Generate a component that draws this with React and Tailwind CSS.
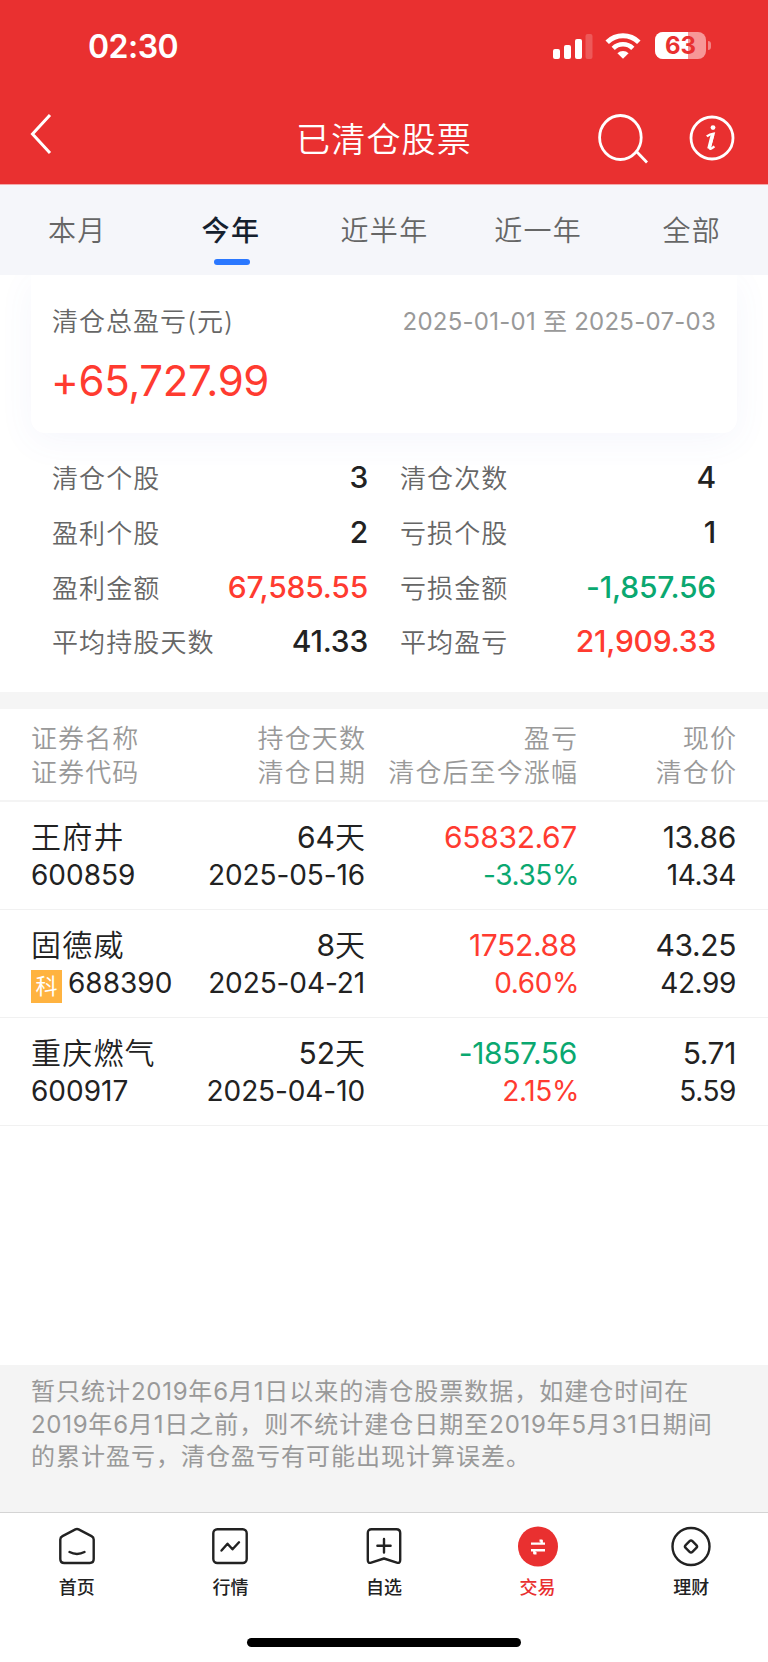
import React from 'react';
import clsx from 'clsx';

const tabs = ['本月', '今年', '近半年', '近一年', '全部'];

const stats = [
  { label: '清仓个股', value: '3' },
  { label: '清仓次数', value: '4' },
  { label: '盈利个股', value: '2' },
  { label: '亏损个股', value: '1' },
  { label: '盈利金额', value: '67,585.55', color: 'text-[#ff3b30]' },
  { label: '亏损金额', value: '-1,857.56', color: 'text-[#0aa870]' },
  { label: '平均持股天数', value: '41.33' },
  { label: '平均盈亏', value: '21,909.33', color: 'text-[#ff3b30]' },
];

const stocks = [
  { name: '王府井', code: '600859', days: '64', date: '2025-05-16', profit: '65832.67', change: '-3.35%', price: '13.86', sold: '14.34' },
  { name: '固德威', code: '688390', tag: '科', days: '8', date: '2025-04-21', profit: '1752.88', change: '0.60%', price: '43.25', sold: '42.99' },
  { name: '重庆燃气', code: '600917', days: '52', date: '2025-04-10', profit: '-1857.56', change: '2.15%', price: '5.71', sold: '5.59' },
];

const notice = [
  '暂只统计2019年6月1日以来的清仓股票数据，如建仓时间在',
  '2019年6月1日之前，则不统计建仓日期至2019年5月31日期间',
  '的累计盈亏，清仓盈亏有可能出现计算误差。',
];

const signColor = (v) => (v.startsWith('-') ? 'text-[#0aa870]' : 'text-[#ff3b30]');

const StatusBar = () => (
  <div className="flex h-[92px] items-start justify-between pl-[88px] pr-[58px]">
    <span className="mt-[27px] text-[32px] leading-[40px] font-semibold tracking-[-0.5px] text-white">02:30</span>
    <div className="mt-[32px] flex items-center">
      <svg className="h-[26px] w-[40px]" viewBox="0 0 40 26" fill="#fff">
        <rect x="0" y="16" width="7" height="10" rx="2" />
        <rect x="11" y="12" width="7" height="14" rx="2" />
        <rect x="22" y="6" width="7" height="20" rx="2" />
        <rect x="32.5" y="1" width="7" height="25" rx="2" opacity="0.2" />
      </svg>
      <svg className="ml-[12px] h-[26px] w-[36px]" viewBox="0 0 36 26" fill="none" stroke="#fff">
        <path d="M2.2 9.3a22.6 22.6 0 0 1 31.6 0" strokeWidth="5" />
        <path d="M8.2 15.3a14 14 0 0 1 19.6 0" strokeWidth="4.6" />
        <path d="M18 25.7l-5.6-5.4a8 8 0 0 1 11.2 0z" fill="#fff" stroke="none" />
      </svg>
      <div className="relative ml-[14px] flex h-[27px] w-[51px] items-center justify-center overflow-hidden rounded-[8px] bg-[#f79797]">
        <div className="absolute inset-y-0 left-0 w-[33px] bg-white" />
        <span className="relative text-[24px] leading-[27px] font-bold text-[#e93030]">63</span>
      </div>
      <div className="-mr-px ml-[2px] h-[9px] w-[3px] rounded-r-full bg-[#f28383]" />
    </div>
  </div>
);

const NavBar = () => (
  <div className="grid h-[93px] grid-cols-[1fr_auto_1fr] border-b border-[#f3a9aa] text-white">
    <svg className="mt-[21px] ml-[30px] h-[42px] w-[22px]" viewBox="0 0 22 42" fill="none" stroke="#fff" strokeWidth="3">
      <path d="M20 2L2.5 21L20 40" />
    </svg>
    <h1 className="mt-[25px] text-[34px] leading-[46px] font-[350] tracking-[1.2px]">已清仓股票</h1>
    <div className="flex justify-end pr-[33px]">
      <svg className="mt-[21px] h-[51px] w-[50px]" viewBox="0 0 50 51" fill="none" stroke="#fff" strokeWidth="2.8">
        <ellipse cx="22.4" cy="24.5" rx="20.8" ry="22" />
        <path d="M38 38L49 49.5" />
      </svg>
      <svg className="mt-[23px] ml-[41px] h-[46px] w-[46px]" viewBox="0 0 46 46" fill="none" stroke="#fff" strokeWidth="2.8">
        <circle cx="23" cy="23" r="21" />
        <circle cx="24" cy="12.600" r="2.400" fill="#fff" stroke="none" />
        <path d="M17.800 21.400c2-1.600 4.200-2.600 6.800-2.800l-3.800 13.600c-.6 2.400 1.400 2 4.600-.8" strokeWidth="2.400" />
        <path d="M23.600 19.400L20 33.600" strokeWidth="3.600" />
      </svg>
    </div>
  </div>
);

const Tabs = () => (
  <div className="grid h-[90px] grid-cols-5 bg-[#f5f6fa]">
    {tabs.map((tab, i) => (
      <div key={tab} className="flex flex-col items-center">
        <span
          className={clsx(
            'mt-[26px] -mr-px text-[28px] leading-[40px] tracking-[1.3px]',
            i === 1 ? 'font-medium text-[#15202e]' : 'font-[350] text-[#666]'
          )}
        >
          {tab}
        </span>
        {i === 1 && <div className="mt-[8px] ml-[3px] h-[6px] w-[36px] rounded-full bg-[#2b78ff]" />}
      </div>
    ))}
  </div>
);

const Summary = () => (
  <div className="h-[190px] overflow-hidden px-[31px]">
    <div className="h-[158px] rounded-b-[14px] bg-white px-[21px] pt-[29px] shadow-[0_8px_36px_rgba(90,110,200,0.06)]">
      <div className="flex items-center justify-between">
        <span className="text-[26px] leading-[36px] font-[350] tracking-[1px] text-[#666]">清仓总盈亏(元)</span>
        <span className="text-[24px] leading-[36px] tracking-[0.25px] text-[#999]">2025-01-01 至 2025-07-03</span>
      </div>
      <div className="mt-[15px] -ml-px text-[42px] leading-[52px] tracking-[-0.35px] text-[#ff3b30]">+65,727.99</div>
    </div>
  </div>
);

const Stats = () => (
  <div className="grid h-[227px] grid-cols-[316px_316px] content-start gap-x-[32px] bg-white pl-[52px]">
    {stats.map((s) => (
      <div key={s.label} className="flex h-[54.8px] items-start justify-between">
        <span className="text-[26px] leading-[28px] font-[350] tracking-[1.1px] text-[#666]">{s.label}</span>
        <span className={clsx('text-[30px] leading-[25px] font-medium tracking-[-0.2px]', s.color || 'text-[#222]')}>{s.value}</span>
      </div>
    ))}
  </div>
);

const cols = 'grid grid-cols-[150px_184px_212px_159px] px-[31px]';

const StockTable = () => (
  <div className="border-t-[17px] border-[#f5f5f5] bg-white">
    <div className={clsx(cols, 'h-[93px] border-b-2 border-[#f4f4f4] pt-[13px] text-[26px] leading-[34px] font-[350] tracking-[1.1px] whitespace-nowrap text-[#999]')}>
      <div>证券名称<br />证券代码</div>
      <div className="-mr-px text-right">持仓天数<br />清仓日期</div>
      <div className="-mr-px flex flex-col items-end"><span>盈亏</span><span>清仓后至今涨幅</span></div>
      <div className="-mr-px text-right">现价<br />清仓价</div>
    </div>
    {stocks.map((s) => (
      <div key={s.code} className={clsx(cols, 'h-[108px] border-b border-[#f1f1f1] pt-[16px] text-[28px] leading-[39px] text-[#222]')}>
        <div>
          <div className="text-[30px] leading-[38px] font-[350] tracking-[1.2px]">{s.name}</div>
          <div className="flex">
            {s.tag && (
              <span className="mt-[6px] mr-[6px] h-[33px] w-[31px] bg-[#ffb340] text-center text-[22px] leading-[33px] text-white">{s.tag}</span>
            )}
            {s.code}
          </div>
        </div>
        <div className="text-right">
          <div className="text-[30px] leading-[38px]">{s.days}<span className="font-[350]">天</span></div>
          <div className="tracking-[-0.1px]">{s.date}</div>
        </div>
        <div className="text-right">
          <div className={clsx('text-[30px] leading-[38px] tracking-[-0.35px]', signColor(s.profit))}>{s.profit}</div>
          <div className={clsx('-mr-[2px] tracking-[-0.4px]', signColor(s.change))}>{s.change}</div>
        </div>
        <div className="text-right">
          <div className="text-[30px] leading-[38px] tracking-[-0.4px]">{s.price}</div>
          <div className="tracking-[-0.4px]">{s.sold}</div>
        </div>
      </div>
    ))}
  </div>
);

const Notice = () => (
  <div className="h-[147px] bg-[#f4f4f4] pt-[11px] pl-[31px] text-[24px] leading-[32.5px] tracking-[1px] whitespace-nowrap text-[#999]">
    {notice.map((line) => (
      <p key={line}>
        {line.split(/(\d+)/).map((part, i) => (
          <span key={i} className={clsx(i % 2 === 1 && 'tracking-[0.7px]')}>{part}</span>
        ))}
      </p>
    ))}
  </div>
);

const icons = {
  首页: (
    <>
      <path d="M3.300 13.600c0-1.700.6-2.700 2.200-3.500L18.400 3.400c1.200-.6 2-.6 3.200 0L34.500 10.100c1.600.8 2.200 1.800 2.200 3.500V33c0 2.800-1.200 4-4 4H7.300c-2.800 0-4-1.200-4-4z" />
      <path d="M12.500 26c4.600 2.400 10.400 2.400 15 0" strokeLinecap="round" />
    </>
  ),
  行情: (
    <>
      <rect x="3.300" y="3.300" width="33.400" height="33.700" rx="4" />
      <path d="M11.500 24.500l6-6.800l5 5.600l6.500-7" strokeLinecap="round" />
    </>
  ),
  自选: (
    <>
      <path d="M7.600 3.300h24.800c2.600 0 3.800 1.200 3.800 3.800v26.900c0 2.600-1.200 3.400-3.400 2.600L20 32.500L7.200 36.600C5 37.400 3.800 36.600 3.800 34V7.100c0-2.600 1.200-3.800 3.800-3.800z" />
      <path d="M13.400 19.700h13.200M20 13v13.500" strokeLinecap="round" />
    </>
  ),
  交易: (
    <>
      <circle cx="20" cy="20.500" r="20" fill="#e93030" stroke="none" />
      <path d="M13 17.600h14M21.500 14.600h2.200v3M27 24.200H13M18.500 27.200h-2.200v-3" strokeWidth="2.400" stroke="#fff" />
    </>
  ),
  理财: (
    <>
      <circle cx="20" cy="20.500" r="18.500" />
      <rect x="15.200" y="15.700" width="9.600" height="9.600" rx="2" transform="rotate(45 20 20.500)" />
    </>
  ),
};

const TabBar = () => (
  <div className="h-[150px] border-t border-[#d4d4d4] bg-white">
    <div className="grid h-[125px] grid-cols-5">
      {Object.keys(icons).map((name) => (
        <div key={name} className="flex flex-col items-center pt-[13px]">
          <svg className="h-[41px] w-[40px]" viewBox="0 0 40 41" fill="none" stroke="#222" strokeWidth="2.400" strokeLinejoin="round">
            {icons[name]}
          </svg>
          <span className={clsx('mt-[8px] text-[18px] leading-[26px] font-medium', name === '交易' ? 'text-[#e93030]' : 'text-[#222]')}>
            {name}
          </span>
        </div>
      ))}
    </div>
    <div className="mx-auto h-[9px] w-[274px] rounded-full bg-black" />
  </div>
);

const App = () => {
  return (
    <div className="flex h-[1662px] w-[768px] flex-col overflow-hidden bg-white font-['Inter','Noto_Sans_CJK_SC',sans-serif]">
      <div className="h-[185px] shrink-0 bg-[#e93030]">
        <StatusBar />
        <NavBar />
      </div>
      <Tabs />
      <Summary />
      <Stats />
      <StockTable />
      <div className="flex-1" />
      <Notice />
      <TabBar />
    </div>
  );
};

export default App;
